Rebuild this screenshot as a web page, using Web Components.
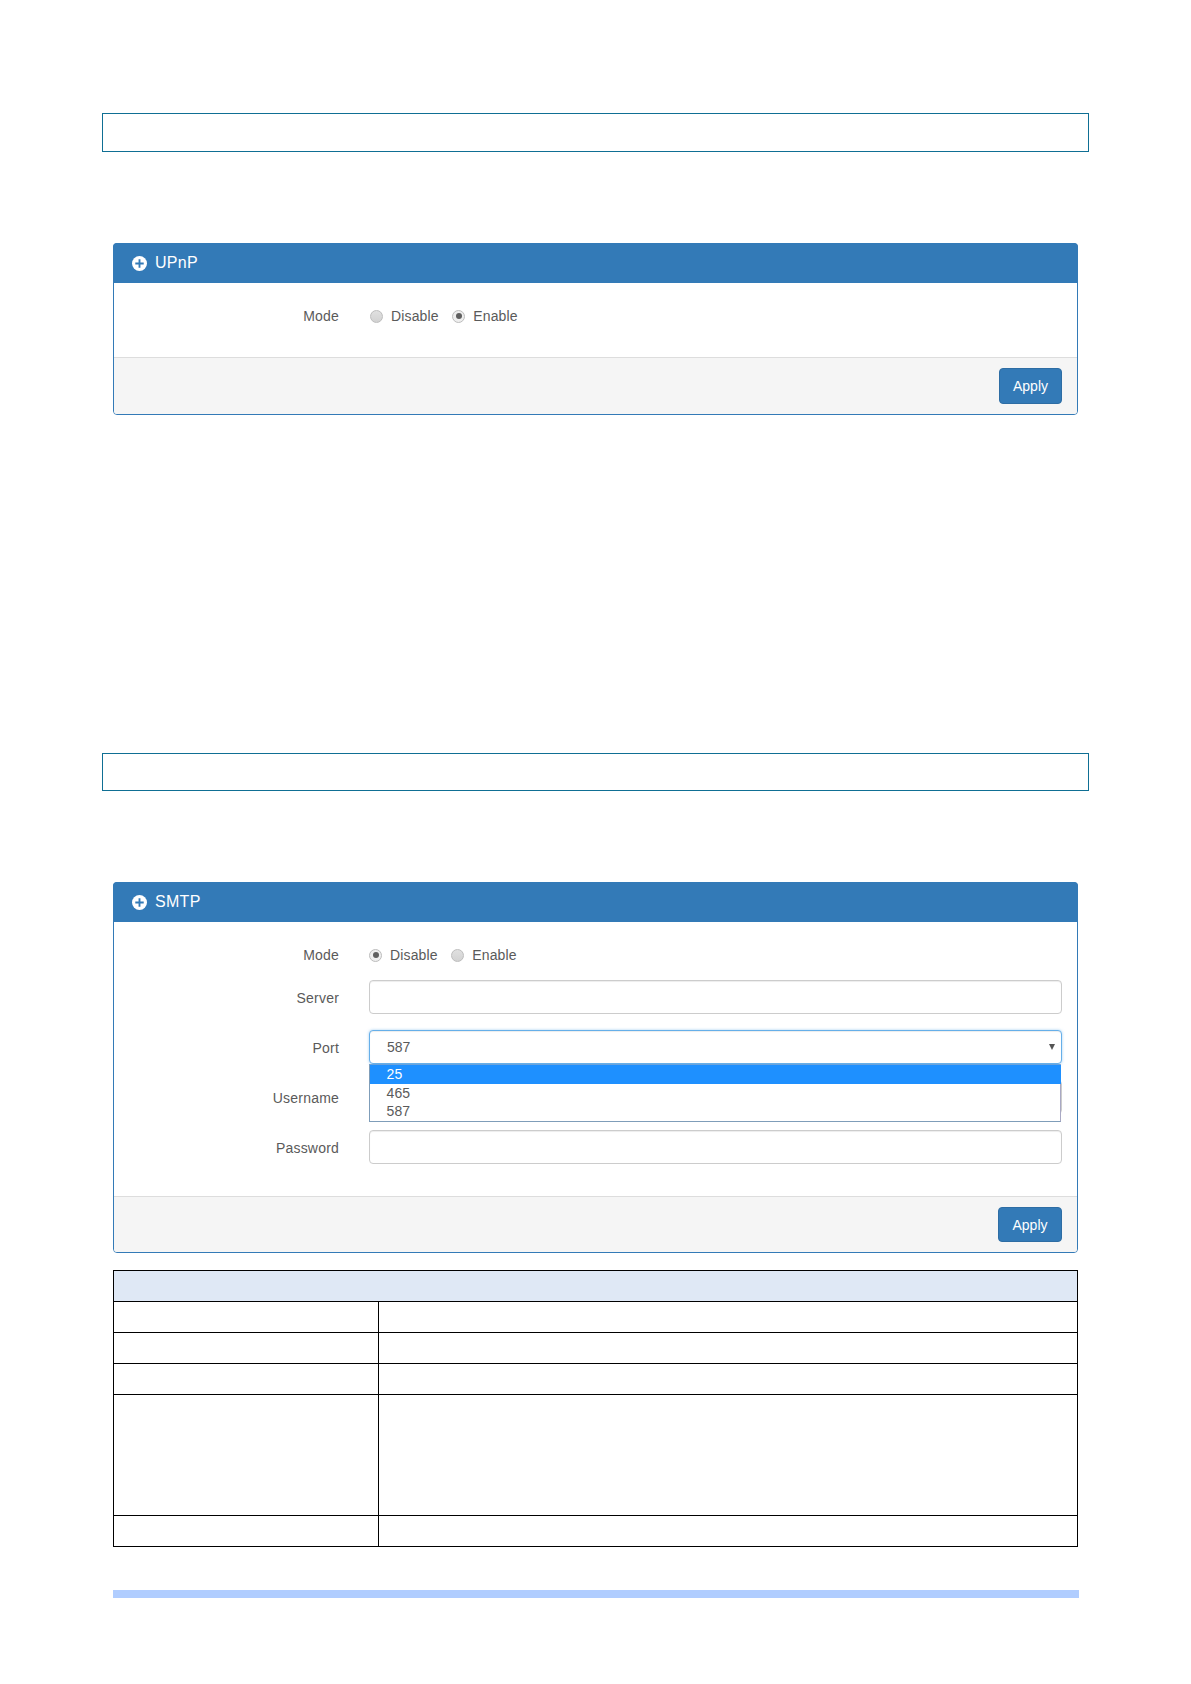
<!DOCTYPE html>
<html>
<head>
<meta charset="utf-8">
<title>UPnP / SMTP</title>
<style>
  html, body { margin: 0; background: #fff; }
  body { font-family: "Liberation Sans", Arial, sans-serif; font-size: 14px; color: #5a5a5a; }
</style>
</head>
<body>
<manual-page>
  <title-box style="margin-bottom: 91px"></title-box>
  <app-panel heading="UPnP" style="margin-bottom: 338px; --btn-h: 36px; --btn-w: 63px">
    <form-row label="Mode" kind="radio"><radio-pair selected="Enable" style="margin-left: 1px"></radio-pair></form-row>
  </app-panel>
  <title-box style="height: 38px; margin-bottom: 91px"></title-box>
  <app-panel heading="SMTP" style="margin-bottom: 17px">
    <form-row label="Mode" kind="radio"><radio-pair selected="Disable"></radio-pair></form-row>
    <form-row label="Server"><text-field></text-field></form-row>
    <form-row label="Port"><select-field value="587" options="25,465,587" highlight="25"></select-field></form-row>
    <form-row label="Username"><text-field></text-field></form-row>
    <form-row label="Password"><text-field></text-field></form-row>
  </app-panel>
  <spec-table></spec-table>
  <footer-bar></footer-bar>
</manual-page>

<script>
class ManualPage extends HTMLElement {
  constructor() {
    super();
    this.attachShadow({mode: 'open'}).innerHTML = `
      <style>
        :host { display: block; padding-top: 113px; width: 1191px; box-sizing: border-box; }
      </style>
      <slot></slot>`;
  }
}

class TitleBox extends HTMLElement {
  constructor() {
    super();
    this.attachShadow({mode: 'open'}).innerHTML = `
      <style>
        :host { display: block; box-sizing: border-box; width: 987px; height: 39px; margin-left: 102px; border: 1px solid #0f6f94; }
      </style>
      <slot></slot>`;
  }
}

class AppPanel extends HTMLElement {
  constructor() {
    super();
    this.attachShadow({mode: 'open'}).innerHTML = `
      <style>
        :host { display: block; box-sizing: border-box; width: 965px; margin-left: 113px; border: 1px solid #337ab7; border-radius: 4px; background: #fff; }
        .head { display: flex; align-items: center; gap: 8px; height: 40px; margin: -1px -1px 0; padding-left: 19px; background: #337ab7; color: #fff; font-size: 16px; letter-spacing: .3px; border-radius: 4px 4px 0 0; }
        svg { width: 15px; height: 15px; display: block; }
        .body { padding: 20px 15px 16px 0; }
        .foot { display: flex; justify-content: flex-end; padding: 10px 15px 10px 0; background: #f5f5f5; border-top: 1px solid #ddd; border-radius: 0 0 3px 3px; }
        button { width: var(--btn-w, 64px); height: var(--btn-h, 35px); padding: 0; border: 1px solid #2e6da4; border-radius: 4px; background: #337ab7; color: #fff; font: 14px "Liberation Sans", Arial, sans-serif; }
      </style>
      <div class="head">
        <svg viewBox="0 0 16 16"><circle cx="8" cy="8" r="8" fill="#fff"/><path d="M7 3.5h2v3.5h3.5v2H9v3.5H7V9H3.5V7H7z" fill="#337ab7"/></svg>
        <span class="title"></span>
      </div>
      <div class="body"><slot></slot></div>
      <div class="foot"><button type="button">Apply</button></div>`;
  }
  connectedCallback() {
    this.shadowRoot.querySelector('.title').textContent = this.getAttribute('heading');
  }
}

class FormRow extends HTMLElement {
  constructor() {
    super();
    this.attachShadow({mode: 'open'}).innerHTML = `
      <style>
        :host { display: grid; grid-template-columns: 225px 1fr; column-gap: 30px; align-items: center; min-height: 34px; margin-bottom: 16px; }
        :host([kind="radio"]) { min-height: 26px; margin-bottom: 12px; }
        label { text-align: right; letter-spacing: .2px; padding-top: 1px; }
        :host([kind="radio"]) label { padding-top: 0; }
      </style>
      <label></label>
      <div><slot></slot></div>`;
  }
  connectedCallback() {
    this.shadowRoot.querySelector('label').textContent = this.getAttribute('label');
  }
}

class RadioPair extends HTMLElement {
  constructor() {
    super();
    this.attachShadow({mode: 'open'}).innerHTML = `
      <style>
        :host { display: flex; align-items: center; height: 26px; }
        .opt { display: flex; align-items: center; gap: 8px; margin-right: 13.5px; letter-spacing: .15px; }
        .dot { box-sizing: border-box; width: 13px; height: 13px; border-radius: 50%; border: 1px solid #bdbdbd; background: linear-gradient(#e0e0e0, #d2d2d2); display: flex; align-items: center; justify-content: center; }
        .dot i { width: 6px; height: 6px; border-radius: 50%; background: #5f5f5f; display: none; }
        .on .dot { background: #eee; }
        .on .dot i { display: block; }
      </style>
      <div class="opt" data-v="Disable"><span class="dot"><i></i></span><span>Disable</span></div>
      <div class="opt" data-v="Enable"><span class="dot"><i></i></span><span>Enable</span></div>`;
  }
  connectedCallback() {
    const selected = this.getAttribute('selected');
    this.shadowRoot.querySelectorAll('.opt').forEach(o => {
      o.classList.toggle('on', o.dataset.v === selected);
    });
  }
}

class TextField extends HTMLElement {
  constructor() {
    super();
    this.attachShadow({mode: 'open'}).innerHTML = `
      <style>
        :host { display: block; box-sizing: border-box; height: 34px; border: 1px solid #ccc; border-radius: 4px; background: #fff; box-shadow: inset 0 1px 1px rgba(0,0,0,.075); }
      </style>`;
  }
}

class SelectField extends HTMLElement {
  constructor() {
    super();
    this.attachShadow({mode: 'open'}).innerHTML = `
      <style>
        :host { display: block; position: relative; height: 34px; z-index: 2; }
        .box { box-sizing: border-box; height: 34px; display: flex; align-items: center; justify-content: space-between; padding: 0 6px 0 17px; border: 1px solid #66afe9; border-radius: 4px; background: #fff; box-shadow: inset 0 1px 1px rgba(0,0,0,.075), 0 0 3px rgba(102,175,233,.6); }
        .caret { width: 0; height: 0; border-left: 3.5px solid transparent; border-right: 3.5px solid transparent; border-top: 6px solid #555; }
        ul { position: absolute; left: 0; right: 1px; top: 34px; margin: 0; padding: 0 0 1px; list-style: none; box-sizing: border-box; height: 58px; background: #fff; border: 1px solid #7f9db9; border-right-color: #a9a9c4; border-top-color: #6aa3dc; }
        li { height: 18.5px; line-height: 18px; padding-left: 16.5px; letter-spacing: .1px; }
        li.hl { margin-right: -1px; background: #1e90ff; color: #fff; }
      </style>
      <div class="box"><span class="val"></span><span class="caret"></span></div>
      <ul></ul>`;
  }
  connectedCallback() {
    this.shadowRoot.querySelector('.val').textContent = this.getAttribute('value');
    const list = this.shadowRoot.querySelector('ul');
    this.getAttribute('options').split(',').forEach(opt => {
      const li = document.createElement('li');
      li.textContent = opt;
      if (opt === this.getAttribute('highlight')) li.className = 'hl';
      list.appendChild(li);
    });
  }
}

class SpecTable extends HTMLElement {
  constructor() {
    super();
    this.attachShadow({mode: 'open'}).innerHTML = `
      <style>
        :host { display: block; width: 965px; margin-left: 113px; margin-bottom: 43px; }
        table { width: 100%; height: 276px; border-collapse: collapse; table-layout: fixed; }
        td, th { border: 1px solid #000; padding: 0; }
        th { height: 30px; background: #dfe8f5; }
        td { height: 30px; }
        tr.tall td { height: 120px; }
        col.a { width: 265px; }
      </style>
      <table>
        <colgroup><col class="a"><col></colgroup>
        <tr><th colspan="2"></th></tr>
        <tr><td></td><td></td></tr>
        <tr><td></td><td></td></tr>
        <tr><td></td><td></td></tr>
        <tr class="tall"><td></td><td></td></tr>
        <tr><td></td><td></td></tr>
      </table>`;
  }
}

class FooterBar extends HTMLElement {
  constructor() {
    super();
    this.attachShadow({mode: 'open'}).innerHTML = `
      <style>
        :host { display: block; width: 966px; height: 8px; margin-left: 113px; background: #b0cdff; }
      </style>`;
  }
}

customElements.define('manual-page', ManualPage);
customElements.define('title-box', TitleBox);
customElements.define('app-panel', AppPanel);
customElements.define('form-row', FormRow);
customElements.define('radio-pair', RadioPair);
customElements.define('text-field', TextField);
customElements.define('select-field', SelectField);
customElements.define('spec-table', SpecTable);
customElements.define('footer-bar', FooterBar);
</script>
</body>
</html>
